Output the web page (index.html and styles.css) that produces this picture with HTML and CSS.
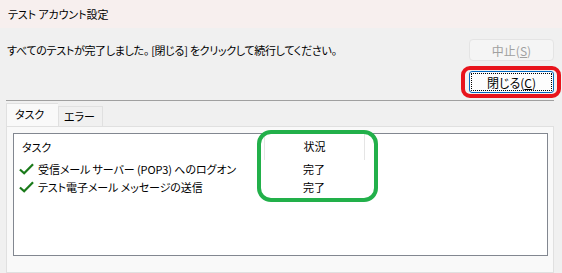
FILE: index.html
```html
<!DOCTYPE html>
<html lang="ja">
<head>
    <meta charset="UTF-8">
    <title>テスト アカウント設定</title>
    <link rel="stylesheet" href="styles.css">
</head>
<body>
    <div class="titlebar">テスト アカウント設定</div>

    <div class="content">
        <div class="top-row">
            <p class="message">すべてのテストが完了しました。 [閉じる] をクリックして続行してください。</p>
            <div class="actions">
                <button class="btn" disabled>中止(<u>S</u>)</button>
                <button class="btn btn-default">閉じる(<u>C</u>)</button>
                <span class="mark mark-red"></span>
            </div>
        </div>

        <div class="divider"></div>

        <div class="tabs">
            <div class="tab active">タスク</div>
            <div class="tab">エラー</div>
        </div>

        <div class="panel">
            <div class="listview">
                <div class="row header">
                    <div class="col-task">タスク</div>
                    <div class="col-status">状況</div>
                </div>
                <div class="row">
                    <div class="col-task">
                        <svg class="check" viewBox="0 0 16 12"><path d="M1 6.5 L5.5 10.5 L15 1" /></svg>
                        受信メール サーバー (POP3) へのログオン
                    </div>
                    <div class="col-status">完了</div>
                </div>
                <div class="row">
                    <div class="col-task">
                        <svg class="check" viewBox="0 0 16 12"><path d="M1 6.5 L5.5 10.5 L15 1" /></svg>
                        テスト電子メール メッセージの送信
                    </div>
                    <div class="col-status">完了</div>
                </div>
                <span class="mark mark-green"></span>
            </div>
        </div>
    </div>
</body>
</html>
```

FILE: styles.css
```css
body {
    margin: 0;
    background: #f0f0f0;
    font-family: "Noto Sans CJK JP", "Noto Sans", sans-serif;
    font-size: 11px;
    letter-spacing: -0.1px;
    font-feature-settings: "palt";
    color: #000;
}
.titlebar {
    height: 28px;
    line-height: 28px;
    padding-left: 8px;
    background: #f7efee;
}
.content {
    padding: 0 8px 0 6px;
}
.top-row {
    display: flex;
    justify-content: space-between;
    align-items: flex-start;
    padding-top: 11px;
}
.message {
    margin: 0;
    padding-left: 1px;
    line-height: 22px;
    letter-spacing: -0.3px;
}
.actions {
    position: relative;
    display: flex;
    flex-direction: column;
    gap: 10px;
}
.btn {
    width: 85px;
    height: 22px;
    padding: 0;
    font: inherit;
    font-size: 12px;
    font-feature-settings: "palt";
    border-radius: 4px;
    border: 1px solid #e4e4e4;
    background: #f5f5f5;
    color: #a0a0a0;
}
.btn u {
    text-decoration-thickness: 1px;
}
.btn-default {
    background: #fdfdfd;
    color: #000;
    border: 1px solid #0067c0;
    border-radius: 3px;
    outline: 1px dotted #000;
    outline-offset: -3px;
}
.mark {
    position: absolute;
    pointer-events: none;
}
.mark-red {
    left: -8px;
    top: 27px;
    width: 92px;
    height: 24px;
    border: 4px solid #e8141c;
    border-radius: 9px;
}
.divider {
    margin-top: 7px;
    height: 1px;
    background: #a0a0a0;
}
.tabs {
    display: flex;
    align-items: flex-end;
    margin-top: 3px;
    height: 22px;
}
.tab {
    height: 19px;
    line-height: 19px;
    padding: 0 7px 0 5px;
    border: 1px solid #e0e0e0;
    border-bottom: none;
    background: #f0f0f0;
}
.tab.active {
    height: 22px;
    line-height: 20px;
    padding: 0 14px 0 8px;
    background: #f9f9f9;
    border-right: none;
}
.panel {
    height: 134px;
    border: 1px solid #e0e0e0;
    background: #f9f9f9;
    padding: 6px 5px 5px 6px;
}
.listview {
    position: relative;
    height: 121px;
    background: #fff;
    border: 1px solid #828790;
}
.row {
    display: flex;
    height: 18px;
    line-height: 18px;
}
.row.header {
    height: 26px;
    line-height: 24px;
}
.col-task {
    width: 245px;
    padding-left: 5px;
    display: flex;
    align-items: center;
    white-space: nowrap;
}
.header .col-task {
    padding-left: 8px;
    width: 242px;
}
.col-status {
    width: 100px;
    text-align: center;
}
.header .col-status {
    border-left: 1px solid #e5e5e5;
    border-right: 1px solid #e5e5e5;
    width: 99px;
}
.check {
    width: 15px;
    height: 12px;
    margin-right: 4px;
    fill: none;
    stroke: #1a7a1a;
    stroke-width: 2.4;
}
.mark-green {
    left: 243px;
    top: -4px;
    width: 113px;
    height: 64px;
    border: 4px solid #22b04a;
    border-radius: 14px;
}
```
